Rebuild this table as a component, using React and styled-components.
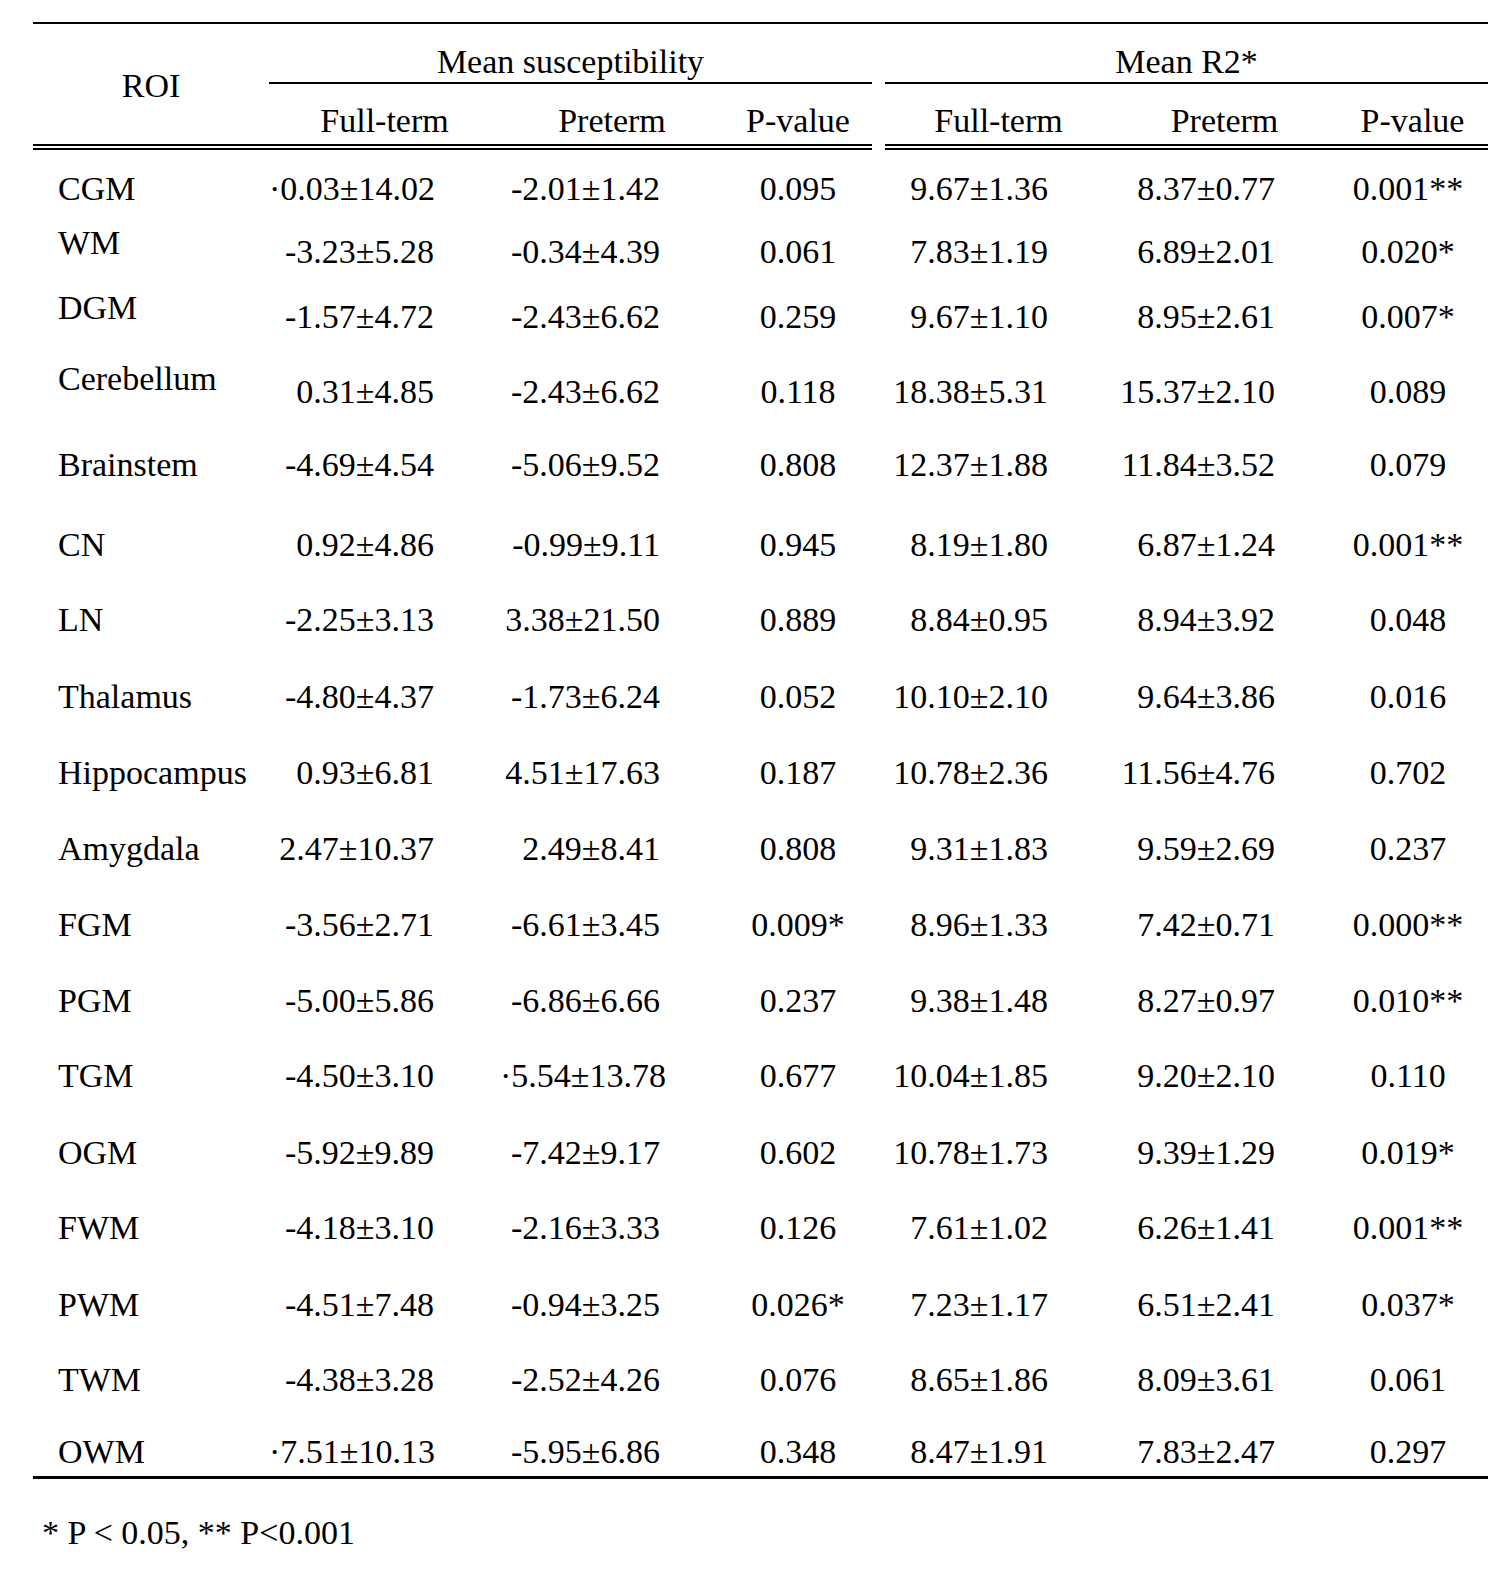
import React from 'react';
import styled, { createGlobalStyle } from 'styled-components';

const GlobalStyle = createGlobalStyle`
  html, body {
    margin: 0;
    padding: 0;
    background: #fff;
  }
`;

// column widths follow the printed table (ROI, 3 susceptibility cols, gap, 3 R2* cols)
const COLS = [
  { w: 236 },
  { w: 231, align: 'right', pr: 66 },
  { w: 224, align: 'right', pr: 64 },
  { w: 148, align: 'center', pr: 0 },
  { w: 13 },
  { w: 227, align: 'right', pr: 64 },
  { w: 225, align: 'right', pr: 62 },
  { w: 151, align: 'center', pr: 9 },
];

const ROWS = [
  { roi: 'CGM', h: 63, v: ['\u00b70.03±14.02', '-2.01±1.42', '0.095', '9.67±1.36', '8.37±0.77', '0.001**'] },
  { roi: 'WM', h: 65, lift: 9, v: ['-3.23±5.28', '-0.34±4.39', '0.061', '7.83±1.19', '6.89±2.01', '0.020*'] },
  { roi: 'DGM', h: 75, lift: 9, v: ['-1.57±4.72', '-2.43±6.62', '0.259', '9.67±1.10', '8.95±2.61', '0.007*'] },
  { roi: 'Cerebellum', h: 73, lift: 13, v: ['0.31±4.85', '-2.43±6.62', '0.118', '18.38±5.31', '15.37±2.10', '0.089'] },
  { roi: 'Brainstem', h: 80, v: ['-4.69±4.54', '-5.06±9.52', '0.808', '12.37±1.88', '11.84±3.52', '0.079'] },
  { roi: 'CN', h: 75, v: ['0.92±4.86', '-0.99±9.11', '0.945', '8.19±1.80', '6.87±1.24', '0.001**'] },
  { roi: 'LN', h: 77, v: ['-2.25±3.13', '3.38±21.50', '0.889', '8.84±0.95', '8.94±3.92', '0.048'] },
  { roi: 'Thalamus', h: 76, v: ['-4.80±4.37', '-1.73±6.24', '0.052', '10.10±2.10', '9.64±3.86', '0.016'] },
  { roi: 'Hippocampus', h: 76, v: ['0.93±6.81', '4.51±17.63', '0.187', '10.78±2.36', '11.56±4.76', '0.702'] },
  { roi: 'Amygdala', h: 76, v: ['2.47±10.37', '2.49±8.41', '0.808', '9.31±1.83', '9.59±2.69', '0.237'] },
  { roi: 'FGM', h: 76, v: ['-3.56±2.71', '-6.61±3.45', '0.009*', '8.96±1.33', '7.42±0.71', '0.000**'] },
  { roi: 'PGM', h: 75, v: ['-5.00±5.86', '-6.86±6.66', '0.237', '9.38±1.48', '8.27±0.97', '0.010**'] },
  { roi: 'TGM', h: 77, v: ['-4.50±3.10', '\u00b75.54±13.78', '0.677', '10.04±1.85', '9.20±2.10', '0.110'] },
  { roi: 'OGM', h: 75, v: ['-5.92±9.89', '-7.42±9.17', '0.602', '10.78±1.73', '9.39±1.29', '0.019*'] },
  { roi: 'FWM', h: 77, v: ['-4.18±3.10', '-2.16±3.33', '0.126', '7.61±1.02', '6.26±1.41', '0.001**'] },
  { roi: 'PWM', h: 75, v: ['-4.51±7.48', '-0.94±3.25', '0.026*', '7.23±1.17', '6.51±2.41', '0.037*'] },
  { roi: 'TWM', h: 72, v: ['-4.38±3.28', '-2.52±4.26', '0.076', '8.65±1.86', '8.09±3.61', '0.061'] },
  { roi: 'OWM', h: 63, v: ['\u00b77.51±10.13', '-5.95±6.86', '0.348', '8.47±1.91', '7.83±2.47', '0.297'] },
];

const App = () => {
  return (
    <Page>
      <GlobalStyle />
      <Table>
        <colgroup>
          {COLS.map((c, i) => (
            <col key={i} style={{ width: c.w }} />
          ))}
        </colgroup>
        <thead>
          <tr>
            <RoiHead rowSpan={2}>ROI</RoiHead>
            <GroupHead colSpan={3}>Mean susceptibility</GroupHead>
            <GapCell />
            <GroupHead colSpan={3}>Mean R2*</GroupHead>
          </tr>
          <tr>
            <SubHead>Full-term</SubHead>
            <SubHead>Preterm</SubHead>
            <SubHead>P-value</SubHead>
            <GapCell />
            <SubHead>Full-term</SubHead>
            <SubHead>Preterm</SubHead>
            <SubHead>P-value</SubHead>
          </tr>
        </thead>
        <tbody>
          {ROWS.map((row) => (
            <Row key={row.roi} $h={row.h}>
              <Label $lift={row.lift || 0}>{row.roi}</Label>
              {row.v.slice(0, 3).map((val, i) => (
                <Value key={i} $align={COLS[i + 1].align} $pr={COLS[i + 1].pr}>{val}</Value>
              ))}
              <GapCell />
              {row.v.slice(3).map((val, i) => (
                <Value key={i} $align={COLS[i + 5].align} $pr={COLS[i + 5].pr}>{val}</Value>
              ))}
            </Row>
          ))}
        </tbody>
      </Table>
      <Note>* P &lt; 0.05, ** P&lt;0.001</Note>
    </Page>
  );
};

export default App;

const Page = styled.div`
  padding: 22px 0 40px 33px;
  font-family: "Liberation Serif", "Times New Roman", serif;
  font-size: 34px;
  line-height: 40px;
  color: #000;
`;

const Table = styled.table`
  width: 1455px;
  table-layout: fixed;
  border-collapse: separate;
  border-spacing: 0;
  border-top: 2px solid #000;
  border-bottom: 3px solid #000;

  th, td {
    padding: 0;
    font-weight: 400;
    white-space: nowrap;
  }
`;

const RoiHead = styled.th`
  text-align: center;
  vertical-align: middle;
  padding-top: 4px !important;
  border-bottom: 6px double #000;
`;

const GroupHead = styled.th`
  text-align: center;
  vertical-align: top;
  padding-top: 18px !important;
  border-bottom: 2px solid #000;
`;

const SubHead = styled.th`
  text-align: center;
  vertical-align: top;
  padding: 17px 0 3px !important;
  border-bottom: 6px double #000;
`;

const GapCell = styled.td``;

const Row = styled.tr`
  height: ${(p) => p.$h}px;

  td {
    vertical-align: top;
  }
`;

const Label = styled.td`
  text-align: left;
  padding: ${(p) => 19 - p.$lift}px 0 0 25px !important;
`;

const Value = styled.td`
  text-align: ${(p) => p.$align};
  padding: 19px ${(p) => p.$pr}px 0 0 !important;
`;

const Note = styled.div`
  margin: 34px 0 0 9px;
`;
